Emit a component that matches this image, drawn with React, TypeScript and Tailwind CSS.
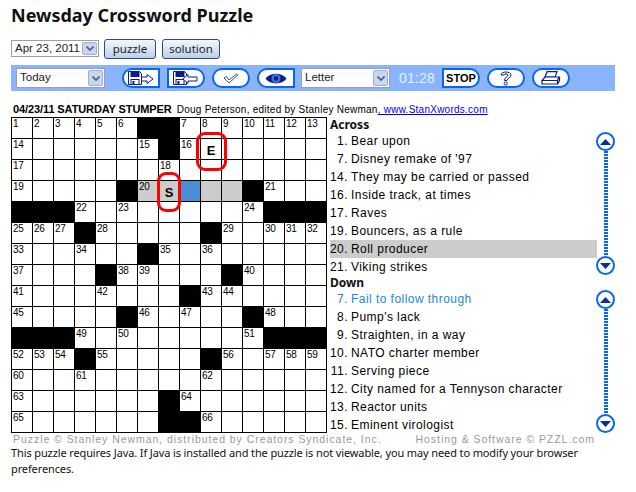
import type { ReactNode } from 'react';

const BLACK: Record<number, number[]> = {
  0: [6, 7],
  1: [7],
  3: [5, 11],
  4: [0, 1, 2, 12, 13, 14],
  5: [3, 9],
  6: [6],
  7: [4, 10],
  8: [8],
  9: [5, 11],
  10: [0, 1, 2, 12, 13, 14],
  11: [3, 9],
  13: [7],
  14: [7, 8],
};

// [row, col, number]
const NUMBERS: [number, number, number][] = [
  [0, 0, 1], [0, 1, 2], [0, 2, 3], [0, 3, 4], [0, 4, 5], [0, 5, 6], [0, 8, 7], [0, 9, 8], [0, 10, 9], [0, 11, 10], [0, 12, 11], [0, 13, 12], [0, 14, 13],
  [1, 0, 14], [1, 6, 15], [1, 8, 16],
  [2, 0, 17], [2, 7, 18],
  [3, 0, 19], [3, 6, 20], [3, 12, 21],
  [4, 3, 22], [4, 5, 23], [4, 11, 24],
  [5, 0, 25], [5, 1, 26], [5, 2, 27], [5, 4, 28], [5, 10, 29], [5, 12, 30], [5, 13, 31], [5, 14, 32],
  [6, 0, 33], [6, 3, 34], [6, 7, 35], [6, 9, 36],
  [7, 0, 37], [7, 5, 38], [7, 6, 39], [7, 11, 40],
  [8, 0, 41], [8, 4, 42], [8, 9, 43], [8, 10, 44],
  [9, 0, 45], [9, 6, 46], [9, 8, 47], [9, 12, 48],
  [10, 3, 49], [10, 5, 50], [10, 11, 51],
  [11, 0, 52], [11, 1, 53], [11, 2, 54], [11, 4, 55], [11, 10, 56], [11, 12, 57], [11, 13, 58], [11, 14, 59],
  [12, 0, 60], [12, 3, 61], [12, 9, 62],
  [13, 0, 63], [13, 8, 64],
  [14, 0, 65], [14, 9, 66],
];

const ACROSS: [number, string][] = [
  [1, 'Bear upon'],
  [7, "Disney remake of '97"],
  [14, 'They may be carried or passed'],
  [16, 'Inside track, at times'],
  [17, 'Raves'],
  [19, 'Bouncers, as a rule'],
  [20, 'Roll producer'],
  [21, 'Viking strikes'],
];

const DOWN: [number, string][] = [
  [7, 'Fail to follow through'],
  [8, "Pump's lack"],
  [9, 'Straighten, in a way'],
  [10, 'NATO charter member'],
  [11, 'Serving piece'],
  [12, 'City named for a Tennyson character'],
  [13, 'Reactor units'],
  [15, 'Eminent virologist'],
];

function cellBg(r: number, c: number) {
  if (BLACK[r]?.includes(c)) return 'bg-black';
  if (r === 3 && c === 8) return 'bg-[#4a8ed6]';
  if (r === 3 && [6, 7, 9, 10].includes(c)) return 'bg-[#cccccc]';
  return 'bg-white';
}

function Grid() {
  const cells = [];
  for (let r = 0; r < 15; r++) {
    for (let c = 0; c < 15; c++) {
      const num = NUMBERS.find((n) => n[0] === r && n[1] === c)?.[2];
      let letter = '';
      if (r === 1 && c === 9) letter = 'E';
      if (r === 3 && c === 7) letter = 'S';
      cells.push(
        <div key={`${r}-${c}`} className={`relative border-r border-b border-black ${cellBg(r, c)}`}>
          {num && <span className="absolute left-[1px] top-[1px] text-[10px] leading-[10px] tracking-[-0.3px] text-black">{num}</span>}
          {letter && <span className="absolute inset-0 flex items-center justify-center pt-[3px] text-[13px] font-bold text-black">{letter}</span>}
        </div>,
      );
    }
  }
  return (
    <div className="relative grid w-[316px] h-[316px] shrink-0 grid-cols-[repeat(15,21px)] grid-rows-[repeat(15,21px)] border-t border-l border-black font-['Liberation_Sans',sans-serif]">
      {cells}
      <div className="absolute left-[184px] top-[14px] w-[31px] h-[39px] rounded-[9px] border-[3px] border-[#ff0000]" />
      <div className="absolute left-[145px] top-[54px] w-[24px] h-[40px] rounded-[9px] border-[3px] border-[#ff0000]" />
    </div>
  );
}

function Circle({ up }: { up?: boolean }) {
  return (
    <div className="flex w-[19px] h-[19px] items-center justify-center rounded-full border-[2px] border-[#0a66f0] bg-white shrink-0">
      <svg width="11" height="6" viewBox="0 0 11 6">
        <path d={up ? 'M5.5 0 L11 6 L0 6 Z' : 'M0 0 L11 0 L5.5 6 Z'} fill="#0b2f8a" />
      </svg>
    </div>
  );
}

function Scroller() {
  return (
    <div className="flex w-[19px] h-[143px] flex-col items-center shrink-0">
      <Circle up />
      <div className="flex-1 w-[4px] bg-[repeating-linear-gradient(to_bottom,#0a66f0_0,#0a66f0_2px,#ffffff_2px,#ffffff_3px)]" />
      <Circle />
    </div>
  );
}

function ClueList({ title, clues, active, selected, titleClass }: { title: string; clues: [number, string][]; active?: number; selected?: number; titleClass: string }) {
  return (
    <div>
      <div className={`text-[12px] font-bold font-['Noto_Sans',sans-serif] text-[#111111] ${titleClass}`}>{title}</div>
      <div className="flex">
        <div className="w-[267px]">
          {clues.map(([n, text]) => (
            <div
              key={n}
              className={`flex h-[18px] items-center text-[12px] tracking-[0.45px] ${active === n ? 'bg-[#cccccc]' : ''} ${selected === n ? 'text-[#1a8ad4]' : 'text-black'}`}
            >
              <span className="w-[18px] text-right">{n}.</span>
              <span className="ml-[3px] whitespace-nowrap">{text}</span>
            </div>
          ))}
        </div>
        <div className="ml-[-1px]">
          <Scroller />
        </div>
      </div>
    </div>
  );
}

function Pill({ children, shape = 'rounded-full' }: { children: ReactNode; shape?: string }) {
  return (
    <div className={`flex w-[38px] h-[20px] items-center justify-center border-[2px] border-[#0a66f0] bg-white ${shape}`}>
      {children}
    </div>
  );
}

function FakeSelect({ label, width, height }: { label: string; width: string; height: string }) {
  return (
    <div className={`flex items-center border border-[#9a9fa8] bg-white ${width} ${height}`}>
      <span className="flex-1 whitespace-nowrap pl-[3px] text-[11.5px] leading-none text-[#222222]">{label}</span>
      <div className="mr-[1px] flex h-[calc(100%-2px)] w-[15px] items-center justify-center rounded-[2px] border border-[#9db0d0] bg-[#c9d6ee]">
        <svg width="8" height="5" viewBox="0 0 8 5">
          <path d="M0.5 0.5 L4 4 L7.5 0.5" fill="none" stroke="#4d6185" strokeWidth="1.7" />
        </svg>
      </div>
    </div>
  );
}

function Floppy({ back }: { back?: boolean }) {
  const arrow = back ? 'M15 3.5 L10 8 L15 12.5 L15 10 L24 10 L24 6 L15 6 Z' : 'M14 6 L19 6 L19 3.5 L25 8 L19 12.5 L19 10 L14 10';
  return (
    <svg width="26" height="14" viewBox="0 0 26 14" fill="none" stroke="#0b1f8a" strokeWidth="1">
      <path d="M0.5 0.5 H11.5 L13.5 2.5 V13.5 H0.5 Z" fill="#ffffff" />
      <rect x="3" y="0.5" width="8" height="5" fill="#0b1f8a" />
      <rect x="3" y="8.5" width="8" height="5" fill="#ffffff" />
      <rect x="4.5" y="10" width="2" height="3" fill="#0b1f8a" stroke="none" />
      <path d={arrow} fill="#ffffff" />
    </svg>
  );
}

function Toolbar() {
  return (
    <div className="mt-[7px] ml-[11px] flex h-[26px] w-[604px] items-center bg-[#8bb4ff] pl-[5px]">
      <FakeSelect label="Today" width="w-[89px]" height="h-[20px]" />
      <div className="ml-[17px] flex gap-[7px]">
        <Pill shape="rounded-l-full"><Floppy /></Pill>
        <Pill shape="rounded-r-full"><Floppy back /></Pill>
        <Pill>
          <svg width="16" height="11" viewBox="0 0 16 11" fill="none" stroke="#3a55a8" strokeWidth="1">
            <path d="M1 5 L3.5 3.5 L6 7 L14 0.8 L15 1.8 L6 10 Z" />
          </svg>
        </Pill>
        <Pill shape="rounded-l-full">
          <svg width="22" height="13" viewBox="0 0 22 13">
            <path d="M0.5 6.5 C5 0 17 0 21.5 6.5 C17 13 5 13 0.5 6.5 Z" fill="#0b1f8a" />
            <circle cx="11" cy="6.5" r="4.5" fill="#3f6fe0" />
            <circle cx="11" cy="6.5" r="2.2" fill="#0b1f8a" />
          </svg>
        </Pill>
      </div>
      <div className="ml-[6px]">
        <FakeSelect label="Letter" width="w-[89px]" height="h-[20px]" />
      </div>
      <span className="ml-[9px] w-[36px] text-[14px] tracking-[0.2px] text-[#e6efff]">01:28</span>
      <div className="ml-[7px] flex gap-[7px]">
        <Pill shape="rounded-r-full"><span className="text-[11px] font-bold leading-none text-black">STOP</span></Pill>
        <Pill>
          <svg width="12" height="15" viewBox="0 0 12 15" fill="none" stroke="#0b1f8a" strokeWidth="1">
            <path d="M1 4 C1 0 11 0 11 4 C11 7 7 7 7 9.5 L4.5 9.5 C4.5 6 8 6 8 4 C8 2.5 4 2.5 4 4 Z" />
            <circle cx="5.7" cy="12.5" r="1.6" />
          </svg>
        </Pill>
        <Pill>
          <svg width="20" height="14" viewBox="0 0 20 14" fill="none" stroke="#0b1f8a" strokeWidth="1.2">
            <path d="M6 0.7 H16 L14 6 H4 Z" fill="#ffffff" />
            <path d="M4 6 H18 L16.5 9.5 H1 Z" fill="#ffffff" />
            <path d="M1 9.5 V13 H16.5 V9.5 M16.5 13 L18.5 9.5 V6" />
          </svg>
        </Pill>
      </div>
    </div>
  );
}

export default function App() {
  return (
    <div className="w-[636px] h-[492px] overflow-hidden bg-white font-['Liberation_Sans',sans-serif] text-black">
      <h1 className="ml-[11px] pt-[3px] h-[39px] text-[18px] font-bold leading-[25px] text-[#111111] font-['Noto_Sans',sans-serif]">
        Newsday Crossword Puzzle
      </h1>

      <div className="ml-[11px] flex h-[19px] items-center">
        <FakeSelect label="Apr 23, 2011" width="w-[88px]" height="h-[17px]" />
        <button className="ml-[5px] h-[20px] w-[52px] rounded-[3px] border border-[#2f4a80] bg-gradient-to-b from-[#f4f8fd] to-[#bcd0ea] text-[11.5px] leading-none text-[#222222] font-['Noto_Sans',sans-serif]">puzzle</button>
        <button className="ml-[6px] h-[20px] w-[58px] rounded-[3px] border border-[#2f4a80] bg-gradient-to-b from-[#f4f8fd] to-[#bcd0ea] text-[11.5px] leading-none text-[#222222] font-['Noto_Sans',sans-serif]">solution</button>
      </div>

      <Toolbar />

      <div className="ml-[13px] mt-[11px] flex h-[15px] items-center whitespace-nowrap text-[10px] tracking-[0.25px]">
        <span className="text-[11px] font-bold tracking-[-0.1px]">04/23/11 SATURDAY STUMPER</span>
        <span className="ml-[5px]">Doug Peterson, edited by Stanley Newman</span>
        <span className="text-[#0000ee] underline">, www.StanXwords.com</span>
      </div>

      <div className="ml-[11px] flex">
        <Grid />
        <div className="ml-[3px] w-[288px]">
          <ClueList title="Across" clues={ACROSS} active={20} titleClass="h-[15px] leading-[15px]" />
          <ClueList title="Down" clues={DOWN} selected={7} titleClass="h-[14px] leading-[14px]" />
        </div>
      </div>

      <div className="ml-[13px] flex h-[11px] items-center whitespace-nowrap text-[10.5px] tracking-[0.95px] text-[#9a9a9a]">
        <span>Puzzle © Stanley Newman, distributed by Creators Syndicate, Inc.</span>
        <span className="ml-[34px]">Hosting &amp; Software © PZZL.com</span>
      </div>
      <p className="ml-[11px] w-[590px] text-[11px] leading-[16px] tracking-[-0.12px] text-[#111111] font-['Noto_Sans',sans-serif]">
        This puzzle requires Java. If Java is installed and the puzzle is not viewable, you may need to modify your browser preferences.
      </p>
    </div>
  );
}
